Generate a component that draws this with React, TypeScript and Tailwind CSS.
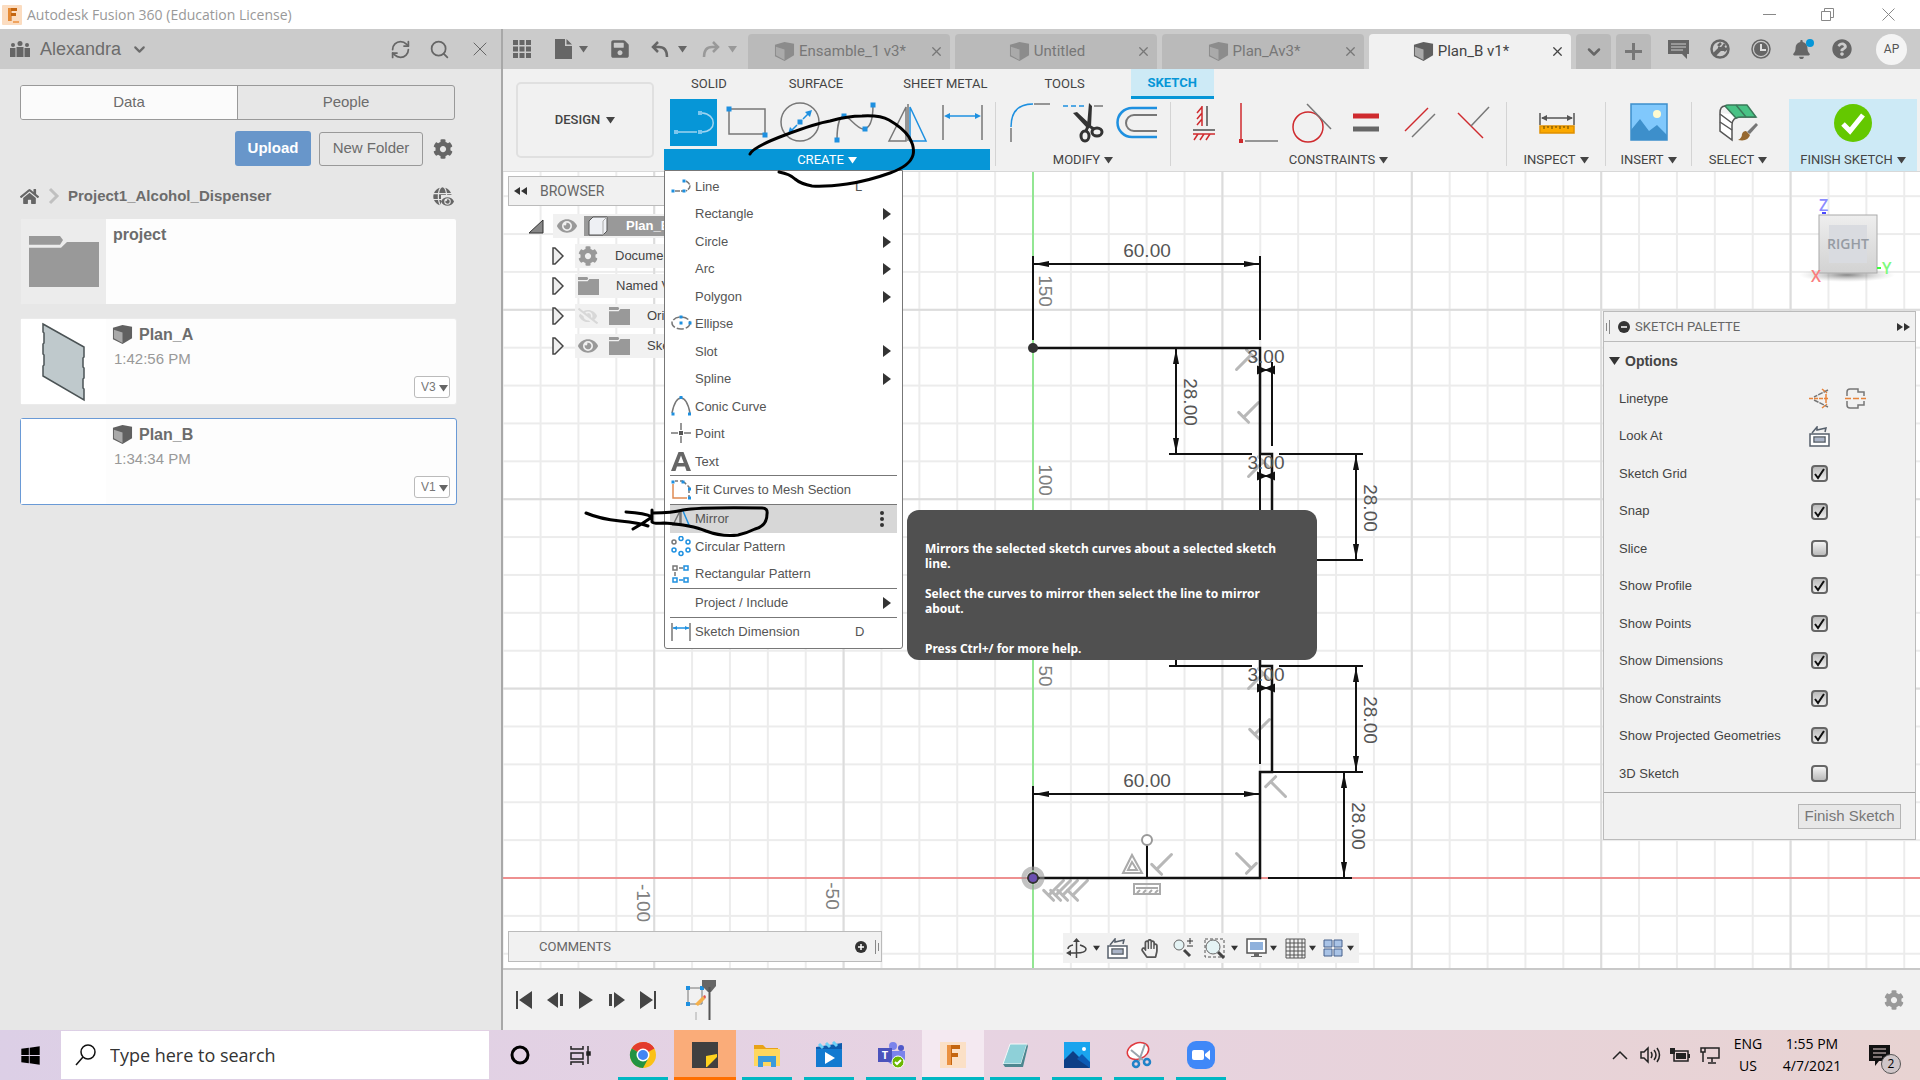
import React, { useState } from 'react';
import { FaHome, FaCog, FaEye, FaEyeSlash, FaWindows, FaBell, FaQuestionCircle, FaGlobe, FaSave, FaRegHandPaper } from 'react-icons/fa';
import { ChevronDown, Search, X, RefreshCw } from 'lucide-react';

const BLUE = '#1e90e0';
const RED = '#cf2a2e';
const GRAY = '#777';

const Caret = ({ className = '' }: { className?: string }) => (
  <svg width="9" height="8" viewBox="0 0 9 8" className={className}>
    <path d="M0 1h9L4.500 7.500z" fill="currentColor" />
  </svg>
);

const Cube = ({ size = 22, light = '#a9a9a9', dark = '#606060' }: { size?: number; light?: string; dark?: string }) => (
  <svg width={size} height={size} viewBox="0 0 22 22" className="shrink-0">
    <path d="M1 4l10-3 10 2v12l-10 6L1 16z" fill={dark} />
    <path d="M2 6l9 3v11l-9-5z" fill={light} />
  </svg>
);

const Folder = ({ width = 21, height = 18 }: { width?: number; height?: number }) => (
  <svg width={width} height={height} viewBox="0 0 70 52" preserveAspectRatio="none" className="shrink-0">
    <path d="M0 0h31l3 4-3 5H0z" fill="#999" />
    <path d="M0 12h32l6-6h32v46H0z" fill="#999" />
  </svg>
);

/* ---------- title bar ---------- */

const TitleBar = () => (
  <header className="flex h-[29px] items-center bg-white pl-[2px]">
    <svg width="20" height="20" viewBox="0 0 20 20">
      <rect width="20" height="20" rx="1" fill="#fbdcc0" />
      <path d="M6 3h9v3H9.500v2H14v3H9.500v5H6z" fill="#c4650f" />
      <path d="M6 3h3v13H6z" fill="#e58a35" />
      <path d="M11 17h6" stroke="#f0a35e" strokeWidth="2" />
    </svg>
    <h1 className="ml-[5px] font-['Open_Sans',sans-serif] text-sm text-[#999]">Autodesk Fusion 360 (Education License)</h1>
    <div className="ml-auto flex h-full items-center text-[#888]">
      <button aria-label="Minimize" className="flex w-[58px] justify-center">
        <svg width="13" height="13"><path d="M0 6.500h13" stroke="currentColor" /></svg>
      </button>
      <button aria-label="Restore" className="flex w-[58px] justify-center">
        <svg width="13" height="13" fill="none" stroke="currentColor"><path d="M.5 3.500h9v9h-9zM3.500 3V.5h9v9H10" /></svg>
      </button>
      <button aria-label="Close" className="flex w-[64px] justify-center">
        <svg width="13" height="13"><path d="M.5.5l12 12m0-12l-12 12" stroke="currentColor" /></svg>
      </button>
    </div>
  </header>
);

/* ---------- data panel ---------- */

const PlateThumb = () => (
  <svg width="85" height="85" viewBox="0 0 85 85">
    <path d="M22 5l41 23v10l-1 1v9l1 1v10l-1 1v9l1 1v11L22 57V47l1-1V36l-1-1V25l1-1V14l-1-1z" fill="#bfc9cc" stroke="#4b5355" strokeWidth="1.500" />
  </svg>
);

const FileCard = ({ name, time, version, selected, thumb }: { name: string; time: string; version: string; selected?: boolean; thumb?: React.ReactNode }) => (
  <article className={`flex h-[87px] rounded-[3px] border ${selected ? 'border-[#6a9ad6]' : 'border-[#ebebeb]'} bg-[#fdfdfd]`}>
    <div className="w-[85px] shrink-0 bg-white">{thumb}</div>
    <div className="flex flex-1 flex-col pt-[5px] pr-1.5 pb-[6px] pl-[6px]">
      <div className="flex items-center gap-[6px]">
        <Cube size={21} />
        <span className="text-base leading-5 font-bold text-[#6c6c6c]">{name}</span>
      </div>
      <span className="mt-1 pl-[2px] text-[15px] leading-5 text-[#999]">{time}</span>
      <div className="relative mt-auto self-end text-[#666]">
        <select aria-label={`${name} version`} defaultValue={version} className="block h-[22px] w-[36px] appearance-none rounded-[3px] border border-[#bbb] bg-white pl-[6px] text-xs text-[#777]">
          <option>{version}</option>
        </select>
        <Caret className="pointer-events-none absolute top-[8px] right-[2px]" />
      </div>
    </div>
  </article>
);

const DataPanel = () => (
  <aside className="flex w-[503px] shrink-0 flex-col border-r-2 border-[#a8a8a8] bg-[#e7e7e7] text-[#6c6c6c]">
    <div className="flex h-[40px] items-center bg-[#cbcbcb] pr-[9px] pl-[10px]">
      <button className="flex items-center gap-2.5 text-lg text-[#6c6c6c]">
        <svg width="20" height="16" viewBox="0 0 20 16" fill="#666">
          <circle cx="3" cy="4" r="2" /><circle cx="10" cy="2.500" r="2.500" /><circle cx="17" cy="4" r="2" />
          <path d="M0 7h5.500v9H0zM6.500 6h7v10h-7zM14.500 7H20v9h-5.500z" />
        </svg>
        Alexandra
        <ChevronDown size={17} strokeWidth={3} />
      </button>
      <div className="ml-auto flex items-center gap-[18px] text-[#666]">
        <button aria-label="Refresh"><RefreshCw size={21} strokeWidth={2} /></button>
        <button aria-label="Search"><Search size={21} strokeWidth={2} /></button>
        <button aria-label="Close panel"><X size={24} strokeWidth={1} /></button>
      </div>
    </div>
    <div className="flex flex-col pt-[16px] pr-[44px] pl-[20px] text-[15px]">
      <div className="mr-[2px] flex h-[35px] overflow-hidden rounded-[3px] border border-[#999]">
        <button className="flex-1 border-r border-[#999] bg-[#fbfbfb]">Data</button>
        <button className="flex-1">People</button>
      </div>
      <div className="mt-[11px] flex items-center justify-end gap-[8px] pr-[4px]">
        <button className="h-[35px] w-[76px] rounded-[3px] bg-[#6896ca] font-bold text-white">Upload</button>
        <button className="h-[34px] w-[104px] rounded-[3px] border border-[#999]">New Folder</button>
        <button aria-label="Settings" className="ml-[2px]"><FaCog size={20} color="#666" /></button>
      </div>
      <div className="mt-[20px] flex h-[20px] items-center">
        <FaHome size={19} color="#666" />
        <svg width="12" height="18" className="ml-[9px]"><path d="M2 2l7 7-7 7" fill="none" stroke="#c0c0c0" strokeWidth="3" /></svg>
        <a href="#project" className="ml-[8px] font-bold">Project1_Alcohol_Dispenser</a>
        <span className="relative mr-[5px] ml-auto">
          <FaGlobe size={19} color="#666" />
          <FaEye size={13} color="#666" className="absolute -right-[2px] -bottom-[2px] bg-[#e7e7e7]" />
        </span>
      </div>
      <div className="mt-[12px] flex flex-col gap-[13px]">
        <article className="flex h-[87px] rounded-[3px] border border-[#e7e7e7] bg-[#fdfdfd]">
          <div className="flex w-[85px] items-center justify-center bg-[#ececec]"><Folder width={70} height={51} /></div>
          <span className="pt-[6px] pl-[7px] text-base leading-5 font-bold">project</span>
        </article>
        <FileCard name="Plan_A" time="1:42:56 PM" version="V3" thumb={<PlateThumb />} />
        <FileCard name="Plan_B" time="1:34:34 PM" version="V1" selected />
      </div>
    </div>
  </aside>
);

/* ---------- document tabs ---------- */

const documents = ['Ensamble_1 v3*', 'Untitled', 'Plan_Av3*', 'Plan_B v1*'];

const DocumentBar = () => (
  <div className="flex h-[40px] items-end bg-[#cbcbcb] font-[Roboto,sans-serif] text-[#666]">
    <div className="flex h-full w-[245px] items-center pl-[10px]">
      <button aria-label="Data panel">
        <svg width="18" height="18" viewBox="0 0 18 18" fill="#666">
          {[0, 6.500, 13].map((y) => [0, 6.500, 13].map((x) => <rect key={`${x}-${y}`} x={x} y={y} width="5" height="5" />))}
        </svg>
      </button>
      <button aria-label="File" className="ml-[24px] flex items-center gap-[7px]">
        <svg width="17" height="20"><path d="M0 0h10v7h7v13H0zM11.500 0L17 5.500h-5.500z" fill="#666" /></svg>
        <Caret />
      </button>
      <button aria-label="Save" className="ml-[22px]"><FaSave size={20} /></button>
      <button aria-label="Undo" className="ml-[21px] flex items-center gap-[9px]">
        <svg width="18" height="17" fill="none" stroke="#666" strokeWidth="2.500"><path d="M7 1L2 6l5 5M2 6h6q8 0 8 10" /></svg>
        <Caret />
      </button>
      <button aria-label="Redo" className="ml-[15px] flex items-center gap-[8px] text-[#999]">
        <svg width="18" height="17" fill="none" stroke="#999" strokeWidth="2.500"><path d="M11 1l5 5-5 5M16 6h-6Q2 6 2 16" /></svg>
        <Caret />
      </button>
    </div>
    <div className="flex gap-[5px]">
      {documents.map((doc) => {
        const active = doc === 'Plan_B v1*';
        return (
          <div key={doc} className={`flex h-[35px] w-[202px] items-center rounded-t-[4px] pr-[6px] ${active ? 'bg-[#f1f1f1] text-[#444]' : 'bg-[#bababa] text-[#777]'}`}>
            <button className="flex flex-1 items-center justify-center gap-[4px] pl-[3px] text-[15px]">
              <Cube size={21} light={active ? '#a9a9a9' : '#aaa'} dark={active ? '#606060' : '#8c8c8c'} />
              {doc}
            </button>
            <button aria-label={`Close ${doc}`}><X size={15} strokeWidth={2} /></button>
          </div>
        );
      })}
      <button aria-label="Tab list" className="flex h-[35px] w-[35px] items-center justify-center rounded-t-[4px] bg-[#bababa]"><ChevronDown size={20} strokeWidth={3} /></button>
      <button aria-label="New tab" className="flex h-[35px] w-[35px] items-center justify-center rounded-t-[4px] bg-[#bababa]">
        <svg width="17" height="17"><path d="M8.500 0v17M0 8.500h17" stroke="#777" strokeWidth="3" /></svg>
      </button>
    </div>
    <div className="ml-auto flex h-full items-center gap-[21px] pr-[13px]">
      <button aria-label="Comments">
        <svg width="21" height="19"><path d="M0 0h21v14h-2v5l-5-5H0z" fill="#666" /><path d="M3 4h15M3 7h15M3 10h12" stroke="#cbcbcb" /></svg>
      </button>
      <button aria-label="Extensions">
        <svg width="20" height="20" fill="none" stroke="#666"><circle cx="10" cy="10" r="8.500" strokeWidth="2.500" /><path d="M4 16l7-7M8 10l7 0" strokeWidth="4" /><path d="M8 7l3-3M12 9l3-4M14 12l3-3" strokeWidth="2.500" /></svg>
      </button>
      <button aria-label="Job status">
        <svg width="20" height="20" fill="none"><circle cx="10" cy="10" r="9" stroke="#666" strokeWidth="1.500" /><circle cx="10" cy="10" r="7" fill="#666" /><path d="M10 5v6h5" stroke="#ddd" strokeWidth="2" /></svg>
      </button>
      <button aria-label="Notifications" className="relative">
        <FaBell size={19} />
        <span className="absolute -top-[1px] -right-[3px] h-[8px] w-[8px] rounded-full bg-[#0696d7]" />
      </button>
      <button aria-label="Help"><FaQuestionCircle size={20} /></button>
      <button className="ml-[3px] flex h-[31px] w-[31px] items-center justify-center rounded-full bg-[#f4f4f4] text-xs text-[#555]">AP</button>
    </div>
  </div>
);

/* ---------- ribbon ---------- */

const ToolButton = ({ label, active, children }: { label: string; active?: boolean; children: React.ReactNode }) => (
  <button aria-label={label} className={`h-[47px] w-[47px] shrink-0 ${active ? 'bg-[#0696d7]' : ''}`}>
    <svg width="47" height="47" viewBox="0 0 47 47" fill="none" stroke={GRAY} strokeWidth="1.500">{children}</svg>
  </button>
);

const Dot = ({ x, y, r = 2.500, fill = BLUE }: { x: number; y: number; r?: number; fill?: string }) => (
  <rect x={x - r} y={y - r} width={r * 2} height={r * 2} fill={fill} stroke="none" />
);

const createTools = [
  { label: 'Line', icon: <><g stroke="#9fd4f0"><path d="M8 33h19M32 14c15 1 15 19 0 19" /></g><Dot x={6} y={33} r={2} fill="#7cc6ee" /><Dot x={30} y={33} r={2} fill="#7cc6ee" /><Dot x={30} y={14} r={2} fill="#7cc6ee" /></> },
  { label: 'Rectangle', icon: <><path d="M5 10h36v25H5z" /><Dot x={5} y={10} /><Dot x={41} y={36} /></> },
  { label: 'Circle', icon: <><circle cx="22" cy="23" r="19" /><path d="M25 20l6-6M19 26l-6 6" stroke={BLUE} /><path d="M34 11l-7 2 5 5zM10 35l2-7 5 5z" fill={BLUE} stroke="none" /><Dot x={22} y={23} /></> },
  { label: 'Spline', icon: <><path d="M5 41c0-12 2-24 7-24s12 12 19 13c7 0 10-10 10-24" /><Dot x={5} y={41} /><Dot x={12} y={17} /><Dot x={33} y={30} /><Dot x={41} y={6} /></> },
  { label: 'Mirror', icon: <><path d="M3 42L20 8v34zM22 5v37" /><path d="M24 8l16 34H24z" stroke={BLUE} /></> },
  { label: 'Sketch Dimension', icon: <><path d="M3 6v35M42 6v35" /><path d="M6 17h33" stroke={BLUE} /><path d="M4 17l6-3v6zM41 17l-6-3v6z" fill={BLUE} stroke="none" /></> },
];

const modifyTools = [
  { label: 'Fillet', icon: <><path d="M5 43V29M28 5h16" /><path d="M5 28Q5 5 27 5" stroke={BLUE} /></> },
  { label: 'Trim', icon: <><path d="M3 7h24" stroke={BLUE} strokeDasharray="5 3" /><path d="M34 7h9" /><path d="M29 4l3 3-1 21-4-1zM13 14l4-1 14 13-3 4z" fill="#333" stroke="none" /><g stroke="#333" strokeWidth="3"><path d="M28 27l-2 5M29 27l5 3" /><ellipse cx="25" cy="37" rx="4" ry="5" /><ellipse cx="37" cy="33" rx="5" ry="4" /></g></> },
  { label: 'Offset', icon: <><path d="M43 9H18a14 14 0 000 29h25" stroke={BLUE} strokeWidth="2.500" /><path d="M43 16H20a8 8 0 000 16h23" strokeWidth="2" /></> },
];

const constraintTools = [
  { label: 'Horizontal/Vertical', icon: <><path d="M27 7v20M13 31h22" strokeWidth="2" /><path d="M22 7v20M17 14l5-6M17 20l5-6M17 26l5-6M13 35h22M14 41l4-6M20 41l4-6M26 41l4-6" stroke={RED} /></> },
  { label: 'Coincident', icon: <><path d="M7 4v36" stroke={RED} /><Dot x={7} y={42} r={2} fill={RED} /><path d="M11 42h33" /></> },
  { label: 'Tangent', icon: <><circle cx="20" cy="28" r="15" stroke={RED} /><path d="M19 5l24 25" /></> },
  { label: 'Equal', icon: <><path d="M11 17h26" stroke={RED} strokeWidth="5" /><path d="M11 30h26" stroke="#666" strokeWidth="5" /></> },
  { label: 'Parallel', icon: <><path d="M9 32L32 9" stroke={RED} /><path d="M16 38l23-23" /></> },
  { label: 'Perpendicular', icon: <><path d="M8 14l25 25" stroke={RED} /><path d="M21 27L39 8" /></> },
];

const inspectTools = [
  { label: 'Measure', icon: <><path d="M7 14v12M41 14v12M9 19h30" stroke="#555" /><path d="M8 19l6-3v6zM40 19l-6-3v6z" fill="#555" stroke="none" /><path d="M7 27h34v7H7z" fill="#fba900" stroke="#e09000" /><path d="M11 27v3M15 27v2M19 27v3M23 27v2M27 27v3M31 27v2M35 27v3" stroke="#5d4300" strokeWidth="1" /></> },
];

const insertTools = [
  { label: 'Insert image', icon: <><path d="M6 5h36v36H6z" fill="#80c8fc" stroke="#3d8fcb" /><path d="M6 31l9-11 9 12 8-6 10 10v5H6z" fill="#3d8fcb" stroke="none" /><circle cx="32" cy="15" r="4" fill="#fffbd0" stroke="none" /></> },
];

const selectTools = [
  { label: 'Select', icon: <><path d="M5 14v18l12 9V26q0-8 9-8h15" fill="#fff" stroke="#555" /><path d="M10 7q1-1 3-1h19l9 12H26q-3 0-5 1z" fill="#48c385" stroke="#3a7a5a" /><path d="M21 6l10 12" stroke="#3a7a5a" /><path d="M5 14q0-7 5-7M5 15l12 9M5 23l12 8" stroke="#555" /><path d="M41 24l2 2-8 9-3-2z" fill="#777" stroke="none" /><path d="M31 32l4 4q-2 7-12 5 4-2 4-6 1-3 4-3z" fill="#96682f" stroke="none" /></> },
];

const ToolGroup = ({ title, tools, width, pad }: { title: string; tools: { label: string; icon: React.ReactNode }[]; width: string; pad: string }) => {
  const open = title === 'CREATE';
  return (
    <div className={`relative flex h-[71px] flex-col justify-between ${width}`}>
      <div className={`flex gap-[7px] ${pad}`}>
        {tools.map((tool, i) => <ToolButton key={tool.label} label={tool.label} active={open && i === 0}>{tool.icon}</ToolButton>)}
      </div>
      <button className={`flex h-[21px] items-center justify-center gap-[4px] ${open ? 'bg-[#0696d7] text-white' : ''}`}>
        {title}
        <Caret />
      </button>
      {open ? <CreateMenu /> : null}
    </div>
  );
};

const Divider = () => <div className="mt-[3px] h-[64px] w-px bg-[#d4d4d4]" />;

const Ribbon = () => (
  <div className="flex h-[103px] border-b border-[#d8d8d8] bg-[#f1f1f1] font-[Roboto,sans-serif] text-[13px] text-[#444]">
    <button className="mt-[13px] ml-[13px] flex h-[76px] w-[138px] shrink-0 items-center justify-center gap-[6px] rounded-[5px] border-2 border-[#e0e0e0] font-medium">
      DESIGN
      <Caret />
    </button>
    <div className="ml-[10px] flex flex-1 flex-col">
      <nav className="flex h-[30px] items-center">
        <button className="ml-[27px]">SOLID</button>
        <button className="ml-[62px]">SURFACE</button>
        <button className="ml-[60px]">SHEET METAL</button>
        <button className="ml-[57px]">TOOLS</button>
        <button className="ml-[46px] h-full w-[83px] border-b-[3px] border-[#0696d7] bg-[#cdeaf6] font-bold text-[#0696d7]">SKETCH</button>
      </nav>
      <div className="flex flex-1">
        <ToolGroup title="CREATE" tools={createTools} width="w-[326px]" pad="pl-[6px]" />
        <div className="w-[5px]" />
        <Divider />
        <ToolGroup title="MODIFY" tools={modifyTools} width="w-[174px]" pad="pl-[10px]" />
        <Divider />
        <ToolGroup title="CONSTRAINTS" tools={constraintTools} width="w-[335px]" pad="pl-[9px]" />
        <Divider />
        <ToolGroup title="INSPECT" tools={inspectTools} width="w-[98px]" pad="justify-center" />
        <Divider />
        <ToolGroup title="INSERT" tools={insertTools} width="w-[85px]" pad="justify-center" />
        <Divider />
        <ToolGroup title="SELECT" tools={selectTools} width="w-[92px]" pad="justify-center" />
        <div className="mr-[3px] ml-auto flex w-[128px] flex-col items-center bg-[#cdeaf6]">
          <button className="flex flex-col items-center">
            <svg width="40" height="47" viewBox="0 0 40 47"><circle cx="20" cy="24" r="19" fill="#64c800" /><path d="M10 25l7 7 13-16" fill="none" stroke="#fff" strokeWidth="5" /></svg>
            <span className="mt-[3px] flex h-[21px] items-center gap-[4px] whitespace-nowrap">FINISH SKETCH <Caret /></span>
          </button>
        </div>
      </div>
    </div>
  </div>
);

/* ---------- create menu ---------- */

type Item = { label: string; hint?: string; sub?: boolean; more?: boolean; icon?: React.ReactNode };

const menuGroups: { height: string; items: Item[] }[] = [
  {
    height: 'h-[302px]',
    items: [
      { label: 'Line', hint: 'L', icon: <><path d="M4 15h8M15 5q8 5 0 10" strokeDasharray="5 1" /><Dot x={2} y={15} r={1.500} /><Dot x={13} y={15} r={1.500} /><Dot x={13} y={5} r={1.500} /></> },
      { label: 'Rectangle', sub: true },
      { label: 'Circle', sub: true },
      { label: 'Arc', sub: true },
      { label: 'Polygon', sub: true },
      { label: 'Ellipse', icon: <><ellipse cx="10" cy="10" rx="9" ry="6" strokeDasharray="7 2" /><Dot x={10} y={4} r={1.500} /><Dot x={10} y={10} r={1.500} /><Dot x={19} y={10} r={1.500} /></> },
      { label: 'Slot', sub: true },
      { label: 'Spline', sub: true },
      { label: 'Conic Curve', icon: <><path d="M1 17Q4 2 10 2t9 15" /><Dot x={10} y={1.500} r={1.500} /><Dot x={2} y={18} r={1.500} /><Dot x={18.500} y={18} r={1.500} /></> },
      { label: 'Point', icon: <><path d="M0 10h7M13 10h7M10 0v7M10 13v7" /><Dot x={10} y={10} r={2} fill="#555" /></> },
      { label: 'Text', icon: <path d="M7.500 1h5L20 20h-4.500l-1.500-4.500H6L4.500 20H0zM7.200 12h5.600L10 4.500z" fill="#666" fillRule="evenodd" stroke="none" /> },
    ],
  },
  {
    height: 'h-[28px]',
    items: [{ label: 'Fit Curves to Mesh Section', icon: <><path d="M2 4v14h14" stroke="#e08a52" /><path d="M4 1h8M13 2l5 5v10" strokeDasharray="3 2" /><Dot x={2} y={2} r={1.500} /><Dot x={12} y={2} r={1.500} /><Dot x={18.500} y={9} r={1.500} /><Dot x={18.500} y={18} r={1.500} /></> }],
  },
  {
    height: 'h-[83px]',
    items: [
      { label: 'Mirror', more: true, icon: <><path d="M2 17L9 3v14zM10 1v17" /><path d="M12 3l6 14h-6" stroke={BLUE} /></> },
      { label: 'Circular Pattern', icon: <><circle cx="3" cy="6" r="2" /><g stroke={BLUE}><circle cx="10" cy="2.500" r="2" /><circle cx="17" cy="6" r="2" /><circle cx="17" cy="14" r="2" /><circle cx="10" cy="17.500" r="2" /><circle cx="3" cy="14" r="2" /></g></> },
      { label: 'Rectangular Pattern', icon: <><path d="M2 2h4v4H2zM8 4h4M4 8v4" /><path d="M13 2h4v4h-4zM2 14h4v4H2zM13 14h4v4h-4zM8 16h4" stroke={BLUE} /></> },
    ],
  },
  { height: 'h-[28px]', items: [{ label: 'Project / Include', sub: true }] },
  { height: 'h-[28px]', items: [{ label: 'Sketch Dimension', hint: 'D', icon: <><path d="M1 1v18M19 1v18" /><path d="M2 6h16" stroke={BLUE} /><path d="M2 6l4-2v4zM18 6l-4-2v4z" fill={BLUE} stroke="none" /></> }] },
];

const CreateMenu = () => (
  <div className="absolute top-[71px] left-0 z-20 w-[239px] rounded-b-[3px] border border-[#777] bg-white px-[5px] pt-[2px] pb-[2px] font-['Liberation_Sans',sans-serif] text-[13px] text-[#555]">
    {menuGroups.map((group, i) => (
      <div key={i} className={`grid auto-rows-fr ${group.height} ${i > 0 ? 'box-content border-t border-[#777]' : ''}`}>
        {group.items.map((item) => (
          <button key={item.label} className={`flex items-center text-left ${item.more ? 'bg-[#d7d7d7]' : 'hover:bg-[#e8e8e8]'}`}>
            <span className="flex w-[25px] shrink-0 pl-[1px]">
              {item.icon ? <svg width="21" height="21" viewBox="0 0 21 21" fill="none" stroke={GRAY} strokeWidth="1.500">{item.icon}</svg> : null}
            </span>
            <span className="flex-1 whitespace-nowrap">{item.label}</span>
            {item.hint ? <span className="w-[42px]">{item.hint}</span> : null}
            {item.sub ? <svg width="8" height="12" className="mr-[6px]"><path d="M0 0l8 6-8 6z" fill="#333" /></svg> : null}
            {item.more ? <svg width="4" height="16" className="mr-[13px]" fill="#333"><circle cx="2" cy="2" r="2" /><circle cx="2" cy="8" r="2" /><circle cx="2" cy="14" r="2" /></svg> : null}
          </button>
        ))}
      </div>
    ))}
  </div>
);

/* ---------- sketch canvas ---------- */

// user units are pixels, with the sketch origin at (0, 0)
const Arrow = ({ x, y, turn }: { x: number; y: number; turn: number }) => (
  <path d="M0 0l15-3v6z" fill="#111" stroke="none" transform={`translate(${x} ${y}) rotate(${turn})`} />
);

const HorizontalDim = ({ y }: { y: number }) => (
  <g>
    <path d={`M0 ${y - 8}v84M227 ${y - 8}v84M0 ${y}h227`} />
    <Arrow x={1} y={y} turn={0} />
    <Arrow x={226} y={y} turn={180} />
    <text x="114" y={y - 7} textAnchor="middle" stroke="none" fill="#555">60.00</text>
  </g>
);

const VerticalDim = ({ x, top }: { x: number; top: number }) => (
  <g>
    <path d={`M${x} ${top}v106`} />
    <Arrow x={x} y={top + 1} turn={90} />
    <Arrow x={x} y={top + 105} turn={-90} />
    <text transform={`translate(${x + 8} ${top + 54}) rotate(90)`} textAnchor="middle" stroke="none" fill="#555">28.00</text>
  </g>
);

const SmallDim = ({ y }: { y: number }) => (
  <g>
    <path d={`M226 ${y}h14`} />
    <path d={`M225 ${y - 3}v6l7-3zM241 ${y - 3}v6l-7-3z`} fill="#111" />
    <text x="233" y={y - 7} textAnchor="middle" stroke="none" fill="#555">3.00</text>
  </g>
);

const Perp = ({ x, y, turn }: { x: number; y: number; turn: number }) => (
  <path d="M-7 9H7M0 9V-12" transform={`translate(${x} ${y}) rotate(${turn})`} stroke="#b8b8b8" strokeWidth="3" strokeLinecap="round" />
);

const SketchDrawing = () => (
  <svg className="absolute inset-0 h-full w-full" fontFamily="'Liberation Sans', sans-serif" fontSize="19">
    <defs>
      <pattern id="minor" width="37.880" height="37.880" patternUnits="userSpaceOnUse" x="529" y="705">
        <path d="M0 1H38M1 0V38" stroke="#ececec" strokeWidth="2" fill="none" />
      </pattern>
      <pattern id="major" width="189.400" height="189.400" patternUnits="userSpaceOnUse" x="529" y="705">
        <path d="M0 1H190M1 0V190" stroke="#dcdcdc" strokeWidth="2" fill="none" />
      </pattern>
    </defs>
    <rect width="100%" height="100%" fill="url(#minor)" />
    <rect width="100%" height="100%" fill="url(#major)" />
    <path d="M0 706h100000" stroke="#ee9090" strokeWidth="2" />
    <path d="M530 0v100000" stroke="#93e693" strokeWidth="2" />
    <g transform="translate(530 706)" fill="none" stroke="#111" strokeWidth="2">
      <g fill="#808080" stroke="none" textAnchor="middle">
        <text transform="translate(6 -587) rotate(90)">150</text>
        <text transform="translate(6 -398) rotate(90)">100</text>
        <text transform="translate(6 -202) rotate(90)">50</text>
        <text transform="translate(-396 25) rotate(90)">-100</text>
        <text transform="translate(-207 18) rotate(90)">-50</text>
      </g>
      <Perp x={212} y={-517} turn={225} />
      <Perp x={217} y={-467} turn={45} />
      <Perp x={224} y={-410} turn={225} />
      <Perp x={224} y={-198} turn={225} />
      <Perp x={228} y={-150} turn={45} />
      <Perp x={244} y={-90} turn={135} />
      <Perp x={212} y={-16} turn={-45} />
      <Perp x={130} y={-15} turn={45} />
      <Perp x={22} y={11} turn={45} />
      <Perp x={29} y={11} turn={45} />
      <Perp x={36} y={11} turn={45} />
      <Perp x={46} y={11} turn={45} />
      <path d="M0-530h227v106h12v106h-12v106h12v106h-12V0H0" strokeWidth="2.500" />
      <path d="M239-516v84M227-424v106M239-212v98M227-212v98" />
      <path d="M136-424h83M246-424h84M246-318h84M136-212h83M246-212h84M239-106h91M235 0h84M136-530h84" />
      <HorizontalDim y={-614} />
      <HorizontalDim y={-84} />
      <VerticalDim x={143} top={-530} />
      <VerticalDim x={143} top={-318} />
      <VerticalDim x={323} top={-424} />
      <VerticalDim x={323} top={-212} />
      <VerticalDim x={311} top={-106} />
      <SmallDim y={-508} />
      <SmallDim y={-402} />
      <SmallDim y={-190} />
      <path d="M114 0v-33" />
      <circle cx="114" cy="-38" r="5" fill="#fff" stroke="#999" />
      <g stroke="#aaa">
        <path d="M90-5l9-18 10 18zM95-8l4-8 5 8z" />
        <path d="M101 6h26v10h-26zM103 10h22M104 15l3-3M110 15l3-3M116 15l3-3M122 15l3-3" />
      </g>
      <circle r="9" stroke="#999" strokeOpacity="0.600" strokeWidth="5" />
      <circle r="5" fill="#6b4fb0" stroke="#333" />
      <circle cy="-530" r="5" fill="#333" stroke="none" />
    </g>
  </svg>
);

const TreeToggle = () => (
  <svg width="12" height="18" className="shrink-0"><path d="M1 1h2l8 8-8 8H1z" fill="#eee" stroke="#444" strokeWidth="1.500" /></svg>
);

const treeRows = [
  { label: 'Document Settings', icons: <FaCog size={20} color="#999" className="shrink-0" /> },
  { label: 'Named Views', icons: <Folder /> },
  { label: 'Origin', icons: <><FaEyeSlash size={20} color="#d8d8d8" className="shrink-0" /><Folder /></> },
  { label: 'Sketches', icons: <><FaEye size={20} color="#999" className="shrink-0" /><Folder /></> },
];

const BrowserPanel = () => (
  <section className="absolute top-[4px] left-[5px] w-[240px] overflow-hidden text-[13px] text-[#444]">
    <header className="flex h-[30px] items-center gap-[13px] border border-[#bbb] bg-[#f1f1f1] pl-[5px] font-[Roboto,sans-serif] text-sm text-[#666]">
      <svg width="13" height="8" fill="#333"><path d="M6 0v8L0 4zM13 0v8L7 4z" /></svg>
      BROWSER
    </header>
    <div className="mt-[8px] flex h-[24px] items-center pl-[20px]">
      <svg width="16" height="15"><path d="M15 1v13H1z" fill="#888" stroke="#333" /></svg>
      <div className="ml-[9px] flex h-full flex-1 items-center bg-[#f1f1f1] pl-[4px]">
        <FaEye size={20} color="#999" className="shrink-0" />
        <div className="ml-[7px] flex h-[20px] flex-1 items-center gap-[18px] bg-[#999] pl-[4px] font-bold text-white">
          <svg width="20" height="20" className="shrink-0"><path d="M1 5l4-4h14v14l-4 4H1z" fill="#eef0f4" stroke="#555" /><path d="M15 19V5l4-4" fill="none" stroke="#aaa" /></svg>
          Plan_B
        </div>
      </div>
    </div>
    {treeRows.map((row) => (
      <div key={row.label} className="mt-[6px] flex h-[24px] items-center gap-[11px] pl-[44px]">
        <TreeToggle />
        <div className="flex h-full flex-1 items-center gap-[11px] bg-[#f1f1f1] pl-[3px]">
          {row.icons}
          <span className="ml-[6px] whitespace-nowrap">{row.label}</span>
        </div>
      </div>
    ))}
  </section>
);

const CommandTooltip = () => (
  <div role="tooltip" className="absolute top-[338px] left-[404px] z-10 h-[150px] w-[410px] rounded-[12px] bg-[#505050] px-[18px] pt-[31px] font-['Noto_Sans',sans-serif] text-xs leading-[15px] font-bold text-white">
    <p>Mirrors the selected sketch curves about a selected sketch line.</p>
    <p className="mt-[15px]">Select the curves to mirror then select the line to mirror about.</p>
    <p className="mt-[25px]">Press Ctrl+/ for more help.</p>
  </div>
);

const ViewCube = () => (
  <svg width="110" height="100" viewBox="0 0 110 100" className="absolute top-[20px] right-[10px]" fontFamily="'Open Sans', sans-serif">
    <defs>
      <linearGradient id="cube" x1="0" y1="0" x2="0" y2="1"><stop stopColor="#eee" /><stop offset="1" stopColor="#d2d2d2" /></linearGradient>
      <radialGradient id="shade"><stop stopColor="#555" stopOpacity="0.700" /><stop offset="1" stopColor="#aaa" stopOpacity="0" /></radialGradient>
    </defs>
    <ellipse cx="47" cy="83" rx="48" ry="7" fill="url(#shade)" />
    <rect x="19" y="23" width="58" height="58" fill="url(#cube)" stroke="#aaa" />
    <rect x="29" y="33" width="38" height="38" fill="#d9dbe0" />
    <text x="48" y="57" textAnchor="middle" fontSize="14" fontWeight="600" fill="#969ba3">RIGHT</text>
    <text x="19" y="19" fontSize="16" fontWeight="600" fill="#8c8cff">Z</text>
    <text x="82" y="82" fontSize="16" fontWeight="600" fill="#7dfa7d">Y</text>
    <text x="11" y="90" fontSize="16" fontWeight="600" fill="#fa7d7d">X</text>
    <path d="M22 21h4" stroke="#4a4aff" strokeWidth="2" />
    <path d="M77 76h4" stroke="#3cff3c" strokeWidth="2" />
  </svg>
);

const LookAt = () => (
  <svg width="21" height="21" fill="none" stroke="#555f6b" strokeWidth="1.500"><path d="M1 8h19v12H1zM5 11h11v5H5z" fill="#fff" /><path d="M6 12h9v3H6z" fill="#aab4c8" stroke="none" /><path d="M3 7l5-6v3l9-2-1 4" /></svg>
);

const checks: [string, boolean][] = [
  ['Sketch Grid', true],
  ['Snap', true],
  ['Slice', false],
  ['Show Profile', true],
  ['Show Points', true],
  ['Show Dimensions', true],
  ['Show Constraints', true],
  ['Show Projected Geometries', true],
  ['3D Sketch', false],
];

const SketchPalette = () => (
  <section className="absolute top-[139px] right-[4px] w-[313px] border border-[#bbb] bg-[#f1f1f1] text-[13px] text-[#444]">
    <header className="flex h-[30px] items-center border-b border-[#bbb] pr-[5px] pl-[2px] font-[Roboto,sans-serif] text-[#666]">
      <svg width="4" height="14"><path d="M.5 3v8M3.500 0v14" stroke="#888" /></svg>
      <svg width="12" height="12" className="ml-[8px]"><circle cx="6" cy="6" r="6" fill="#333" /><path d="M3 6h6" stroke="#fff" strokeWidth="1.500" /></svg>
      <span className="ml-[5px]">SKETCH PALETTE</span>
      <svg width="13" height="8" fill="#333" className="ml-auto"><path d="M0 0l6 4-6 4zM7 0l6 4-6 4z" /></svg>
    </header>
    <button className="flex h-[38px] items-center gap-[5px] pl-[5px] text-sm font-bold">
      <svg width="11" height="8"><path d="M0 0h11L5.500 8z" fill="#333" /></svg>
      Options
    </button>
    <div className="grid h-[412px] auto-rows-fr pl-[15px]">
      <div className="flex items-center">
        <span className="w-[190px]">Linetype</span>
        <button aria-label="Construction">
          <svg width="21" height="21" fill="none" stroke="#777" strokeWidth="1.500"><path d="M19 2L5 9M5 12l14 7" strokeDasharray="5 1" /><path d="M0 10.500h20M17 6v9M13 1l5 4M13 20l5-4" stroke="#e8833a" strokeDasharray="4 1" /></svg>
        </button>
        <button aria-label="Centerline" className="ml-[15px]">
          <svg width="21" height="21" fill="none" stroke="#777" strokeWidth="1.500"><path d="M2 8V4q0-3 3-3h8v3h6v4M2 13v4q0 3 3 3h8v-3h6v-4" /><path d="M0 10.500h21" stroke="#e8833a" strokeDasharray="6 2" /></svg>
        </button>
      </div>
      <div className="flex items-center">
        <span className="w-[190px]">Look At</span>
        <button aria-label="Look At"><LookAt /></button>
      </div>
      {checks.map(([label, on]) => (
        <label key={label} className="flex items-center">
          <span className="w-[192px]">{label}</span>
          <span className="grid">
            <input type="checkbox" defaultChecked={on} className="peer h-[17px] w-[17px] appearance-none rounded-[4px] border-2 border-[#666] bg-linear-to-b from-[#f4f4f4] to-[#bbb] [grid-area:1/1] checked:from-[#bbb] checked:to-[#eee]" />
            <svg width="17" height="17" className="pointer-events-none invisible [grid-area:1/1] peer-checked:visible"><path d="M4 9l3 4 6-9" fill="none" stroke="#111" strokeWidth="2" /></svg>
          </span>
        </label>
      ))}
    </div>
    <footer className="flex h-[47px] items-center justify-end border-t border-[#aaa] pr-[14px]">
      <button className="h-[25px] w-[103px] border border-[#b5b5b5] bg-[#e8e8e8] text-[15px] text-[#777]">Finish Sketch</button>
    </footer>
  </section>
);

const Lens = ({ r = 6 }: { r?: number }) => (
  <>
    <path d={`M${r + 7} ${r + 7}l6 6`} stroke="#444" strokeWidth="3" />
    <circle cx={r + 2} cy={r + 2} r={r} fill="#e4f3f4" stroke="#666" />
  </>
);

const NavigationBar = () => (
  <div className="absolute bottom-[5px] left-[560px] flex h-[30px] w-[296px] items-center bg-[#f1f1f1] pl-[3px] text-[#333]">
    <button aria-label="Orbit" className="flex w-[41px] items-center gap-[6px]">
      <svg width="21" height="21" fill="none" stroke="#444" strokeWidth="1.500"><path d="M10.500 2v18M14 7q6 2 6 4 0 4-10 4H3M7 7q-5 1-5 4" /><path d="M10.500 0L14 4H7zM0 15l5-3v6z" fill="#444" stroke="none" /></svg>
      <Caret className="w-[7px]" />
    </button>
    <button aria-label="Look At" className="w-[33px]"><LookAt /></button>
    <button aria-label="Pan" className="w-[32px]"><FaRegHandPaper size={19} color="#555" /></button>
    <button aria-label="Zoom" className="w-[32px]">
      <svg width="21" height="21" fill="none"><Lens r={5} /><path d="M15 3h6M18 0v6M15 8h6" stroke="#333" /></svg>
    </button>
    <button aria-label="Zoom Window" className="flex w-[42px] items-center gap-[5px]">
      <svg width="22" height="21" fill="none"><path d="M1 1h19v18H1z" stroke="#555" strokeDasharray="3 2" /><Lens r={7} /></svg>
      <Caret className="w-[7px]" />
    </button>
    <button aria-label="Display Settings" className="flex w-[39px] items-center gap-[3px]">
      <svg width="21" height="20"><path d="M1 1h19v14H1z" fill="#fff" stroke="#555" strokeWidth="1.500" /><path d="M4 4h13v8H4z" fill="#8fb1dc" /><path d="M8 15h5v3h3v1H5v-1h3z" fill="#666" /></svg>
      <Caret className="w-[7px]" />
    </button>
    <button aria-label="Grid and Snaps" className="flex w-[38px] items-center gap-[3px]">
      <svg width="21" height="21" fill="none" stroke="#555"><path d="M1 1h19v19H1zM5 1v19M9 1v19M13 1v19M17 1v19M1 5h19M1 9h19M1 13h19M1 17h19" /></svg>
      <Caret className="w-[7px]" />
    </button>
    <button aria-label="Viewports" className="flex items-center gap-[4px]">
      <svg width="20" height="18" fill="#a9c3e6" stroke="#47618c"><path d="M1 1h8v7H1zM11 1h8v7h-8zM1 10h8v7H1zM11 10h8v7h-8z" /></svg>
      <Caret className="w-[7px]" />
    </button>
  </div>
);

const Canvas = () => (
  <main className="relative flex-1 overflow-hidden bg-white">
    <SketchDrawing />
    <BrowserPanel />
    <CommandTooltip />
    <ViewCube />
    <SketchPalette />
    <div className="absolute bottom-[6px] left-[5px] flex h-[31px] w-[374px] items-center border border-[#bbb] bg-[#f1f1f1] pr-[2px] pl-[30px] font-[Roboto,sans-serif] text-[13px] text-[#666]">
      COMMENTS
      <button aria-label="Add comment" className="ml-auto">
        <svg width="12" height="12"><circle cx="6" cy="6" r="6" fill="#333" /><path d="M3 6h6M6 3v6" stroke="#fff" strokeWidth="1.500" /></svg>
      </button>
      <svg width="4" height="14" className="ml-[8px]"><path d="M.5 0v14M3.500 3v8" stroke="#888" /></svg>
    </div>
    <NavigationBar />
  </main>
);

const timelineButtons = [
  { label: 'Go to start', d: 'M1 0h2v18H1zM17 0v18L4 9z' },
  { label: 'Step back', d: 'M12 1v16L1 9zM14 3h3v12h-3z' },
  { label: 'Play', d: 'M2 0v18l14-9z' },
  { label: 'Step forward', d: 'M1 3h3v12H1zM6 1v16l11-8z' },
  { label: 'Go to end', d: 'M1 0v18l13-9zM15 0h2v18h-2z' },
];

const Timeline = () => (
  <div className="flex h-[62px] items-center border-t-2 border-[#c8c8c8] bg-[#f1f1f1] pr-[16px] pl-[12px]">
    <div className="flex gap-[13px]">
      {timelineButtons.map((b) => (
        <button key={b.label} aria-label={b.label}><svg width="18" height="18" fill="#444"><path d={b.d} /></svg></button>
      ))}
    </div>
    <svg width="36" height="42" className="ml-[27px]" fill="none">
      <path d="M4 9h14v16H4z" stroke="#777" />
      <Dot x={4} y={9} r={2} /><Dot x={18} y={9} r={2} /><Dot x={4} y={25} r={2} />
      <path d="M11 25l8-8 2 3-7 7z" fill="#f5b04a" />
      <path d="M19 17l2-1 1 2-1 2z" fill="#e2564f" />
      <path d="M12 33v8" stroke="#aaa" />
      <path d="M18 1h14v6l-5 6h-3l-6-6z" fill="#666" />
      <path d="M25.500 8v33" stroke="#555" strokeWidth="2" />
    </svg>
    <button aria-label="Timeline settings" className="ml-auto"><FaCog size={20} color="#999" /></button>
  </div>
);

/* ---------- taskbar ---------- */

const apps = [
  { name: 'Chrome', icon: <><circle cx="14" cy="14" r="13" fill="#fbc116" /><path d="M14 14L2.700 7.500A13 13 0 0125.300 7.500z" fill="#e33b2e" /><path d="M14 14L2.700 7.500A13 13 0 0014 27l5-9z" fill="#229342" /><path d="M14 1a13 13 0 0111.300 7H14z" fill="#e33b2e" /><circle cx="14" cy="14" r="6.500" fill="#fff" /><circle cx="14" cy="14" r="5" fill="#4285f4" /></> },
  { name: 'Sticky Notes', hot: true, icon: <><path d="M1 1h26v26H1z" fill="#404040" /><path d="M15 26V15l11-2v3L16 26z" fill="#ffd21e" /></> },
  { name: 'File Explorer', icon: <><path d="M1 4h9l3 3h12v6H1z" fill="#e8a317" /><path d="M1 8h26v17H1z" fill="#ffd75e" /><path d="M5 15h18v11h-5v-5h-8v5H5z" fill="#3b9bdc" /></> },
  { name: 'Movies & TV', icon: <><path d="M1 6l26-4v23H1z" fill="#0e5cad" /><path d="M1 8h26v18H1z" fill="#137ad0" /><path d="M4 3l4 4M11 2l4 4M18 1l4 4" stroke="#6bd0f7" strokeWidth="3" /><path d="M10 11l10 6-10 6z" fill="#fff" /></> },
  { name: 'Teams', icon: <><circle cx="16" cy="5" r="4" fill="#7b83eb" /><circle cx="24" cy="7" r="3" fill="#5059c9" /><path d="M9 10h19v8q-3 6-8 6-8 0-11-6z" fill="#7b83eb" /><path d="M1 7h14v14H1z" fill="#4b53bc" /><text x="8" y="18" fontSize="11" fontWeight="bold" fill="#fff" textAnchor="middle">T</text><circle cx="21" cy="21" r="6" fill="#6bb700" stroke="#fff" /><path d="M18 21l2 2 4-4" stroke="#fff" strokeWidth="2" fill="none" /></> },
  { name: 'Fusion 360', open: true, icon: <><path d="M1 1h26v26H1z" fill="#fbe0c6" /><path d="M8 4h13v4h-8v4h6v4h-6v8H8z" fill="#c4650f" /><path d="M8 4h4v20H8z" fill="#eb9140" /></> },
  { name: 'Notepad', icon: <><path d="M9 3h17l-6 20H2z" fill="#8ed0d8" stroke="#f4f8f8" /><path d="M2 23h18l6-20 1 2-5 21H4z" fill="#4d8790" /></> },
  { name: 'Photos', icon: <><path d="M1 1h26v26H1z" fill="#1aa4ee" /><path d="M1 19l9-9 17 17H1z" fill="#0d3f86" /><path d="M14 18l5-5 8 8v6z" fill="#0c5bb5" /><circle cx="21" cy="8" r="2" fill="#fff" /></> },
  { name: 'Snipping Tool', icon: <><ellipse cx="13" cy="10" rx="11" ry="8" fill="#fff" stroke="#e0393e" strokeWidth="1.500" transform="rotate(-20 13 10)" /><path d="M14 20L20 3M18 19L6 9" stroke="#9aa4ad" strokeWidth="2" /><g fill="none" stroke="#1f82c8" strokeWidth="2.500"><circle cx="11" cy="23" r="3" /><circle cx="22" cy="21" r="3" /></g></> },
  { name: 'Zoom', icon: <><rect x="0" y="0" width="28" height="28" rx="9" fill="#3f88f8" /><rect x="5" y="9" width="12" height="10" rx="2" fill="#fff" /><path d="M18 13l5-4v10l-5-4z" fill="#fff" /></> },
];

const Taskbar = () => (
  <footer className="flex h-[50px] items-stretch bg-linear-to-r from-[#dccfe6] via-[#e7d3e2] to-[#e8d3d2] font-['Open_Sans',sans-serif] text-black">
    <button aria-label="Start" className="flex w-[61px] items-center justify-center"><FaWindows size={21} /></button>
    <label className="my-px flex w-[428px] items-center gap-[13px] bg-white pl-[14px]">
      <svg width="22" height="22" fill="none" stroke="#111" strokeWidth="1.500"><circle cx="13" cy="8" r="7" /><path d="M8 13l-7 8" /></svg>
      <input type="text" aria-label="Search" placeholder="Type here to search" className="flex-1 text-lg outline-none placeholder:text-[#333]" />
    </label>
    <button aria-label="Cortana" className="flex w-[61px] items-center justify-center"><svg width="20" height="20"><circle cx="10" cy="10" r="8" fill="none" stroke="#000" strokeWidth="3" /></svg></button>
    <button aria-label="Task View" className="flex w-[62px] items-center justify-center">
      <svg width="22" height="20" fill="none" stroke="#222" strokeWidth="1.500"><path d="M1 1v3h12V1M1 8h12v6H1zM1 20v-3h12v3M18 1v18" /><path d="M17 7h3v3h-3z" fill="#222" /></svg>
    </button>
    {apps.map((app) => (
      <button key={app.name} aria-label={app.name} className={`flex w-[62px] flex-col items-center justify-between pt-[11px] ${app.hot ? 'bg-[#faac79]' : app.open ? 'bg-[#f4e9f1]' : ''}`}>
        <svg width="28" height="28" viewBox="0 0 28 28">{app.icon}</svg>
        <span className={`h-[3px] ${app.hot ? 'w-full bg-[#ff6f00]' : app.open ? 'w-full bg-[#00b7c3]' : 'w-[50px] bg-[#00b7c3]'}`} />
      </button>
    ))}
    <div className="ml-auto flex items-center pr-[4px] text-sm leading-[22px]">
      <svg width="18" height="12" className="mr-[11px]"><path d="M2 10l7-7 7 7" fill="none" stroke="#222" strokeWidth="1.500" /></svg>
      <svg width="21" height="18" fill="none" stroke="#222" strokeWidth="1.500" className="mr-[9px]"><path d="M1 6h3l4-4v14l-4-4H1zM11 6q2 3 0 6M14 4q4 5 0 10M17 2q5 7 0 14" /></svg>
      <svg width="20" height="16" className="mr-[10px]"><path d="M4 4h14v10H4z" fill="none" stroke="#222" strokeWidth="1.500" /><path d="M6 6h10v6H6zM0 1h5v6H0z" fill="#222" /><path d="M19 7v4" stroke="#222" strokeWidth="2" /></svg>
      <svg width="20" height="18" fill="none" stroke="#222" strokeWidth="1.500" className="mr-[12px]"><path d="M5 2h14v10H7M12 12v4M8 17h8M1 2h4v4H1zM3 6v10" /></svg>
      <div className="w-[32px] text-center">ENG<br />US</div>
      <div className="ml-[16px] w-[64px] text-center whitespace-nowrap">1:55 PM<br />4/7/2021</div>
      <button aria-label="Notifications" className="relative ml-[25px] mr-[25px]">
        <svg width="22" height="22"><path d="M0 1h21v16H10l-4 5v-5H0z" fill="#111" /><path d="M4 5h13M4 9h13M4 13h9" stroke="#e8d3d2" /></svg>
        <span className="absolute -right-[10px] -bottom-[8px] flex h-[20px] w-[20px] items-center justify-center rounded-full border border-[#555] bg-[#cfc6c8] text-xs">2</span>
      </button>
    </div>
  </footer>
);

// freehand pen marks over the window
const InkLayer = () => (
  <svg className="pointer-events-none absolute inset-0 z-50 h-full w-full" fill="none" stroke="#000" strokeWidth="3" strokeLinecap="round" strokeLinejoin="round">
    <path d="M750 154Q753 147 785 135T830 121Q848 116 862 116Q880 115 889 120Q903 128 909 137Q915 147 913 155Q910 166 890 173Q868 181 847 184Q825 187 812 186Q801 184 795 179Q790 174 779 172" />
    <path d="M586 513Q600 519 620 521T648 526M626 512Q645 513 652 517Q642 524 633 529M652 510V522Q654 524 664 523Q692 525 706 531Q722 537 738 535Q747 533 755 529Q767 526 767 514Q768 508 762 508Q700 507 683 510Q672 513 653 513" />
  </svg>
);

export default function App() {
  const [showPanel] = useState(true);

  return (
    <div className="relative flex min-h-screen flex-col overflow-hidden font-['Liberation_Sans',Arial,sans-serif]">
      <TitleBar />
      <div className="flex flex-1">
        {showPanel ? <DataPanel /> : null}
        <div className="flex min-w-0 flex-1 flex-col">
          <DocumentBar />
          <Ribbon />
          <Canvas />
          <Timeline />
        </div>
      </div>
      <Taskbar />
      <InkLayer />
    </div>
  );
}
